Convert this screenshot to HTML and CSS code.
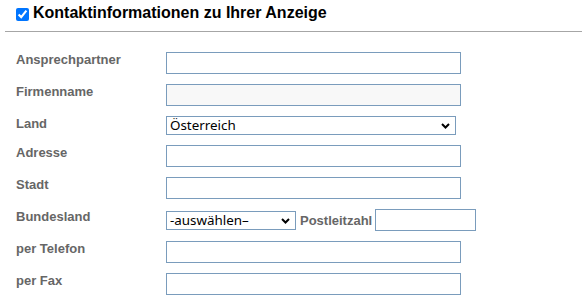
FILE: index.html
```html
<!DOCTYPE html>
<html lang="de">
<head>
    <meta charset="UTF-8">
    <meta name="viewport" content="width=device-width, initial-scale=1.0">
    <title>Kontaktinformationen</title>
    <link rel="stylesheet" href="styles.css">
</head>
<body>
    <div class="kontakt">
        <h2 class="kontakt-titel">
            <input type="checkbox" id="kontaktAktiv" checked>
            <label for="kontaktAktiv">Kontaktinformationen zu Ihrer Anzeige</label>
        </h2>

        <table class="kontakt-tabelle">
            <tr>
                <td class="feld-name">Ansprechpartner</td>
                <td class="feld"><input type="text" class="eingabe"></td>
            </tr>
            <tr>
                <td class="feld-name">Firmenname</td>
                <td class="feld"><input type="text" class="eingabe gesperrt" readonly></td>
            </tr>
            <tr>
                <td class="feld-name">Land</td>
                <td class="feld">
                    <span class="auswahl-box">
                        <select class="auswahl auswahl-land">
                            <option>Österreich</option>
                            <option>Deutschland</option>
                            <option>Schweiz</option>
                        </select>
                        <svg class="pfeil" width="9" height="6" viewBox="0 0 9 6"><path d="M1 1 L4.5 4.5 L8 1" fill="none" stroke="#000" stroke-width="2"/></svg>
                    </span>
                </td>
            </tr>
            <tr>
                <td class="feld-name">Adresse</td>
                <td class="feld"><input type="text" class="eingabe"></td>
            </tr>
            <tr>
                <td class="feld-name">Stadt</td>
                <td class="feld"><input type="text" class="eingabe"></td>
            </tr>
            <tr>
                <td class="feld-name">Bundesland</td>
                <td class="feld feld-zeile">
                    <span class="auswahl-box">
                        <select class="auswahl auswahl-bundesland">
                            <option>-auswählen–</option>
                            <option>Wien</option>
                            <option>Tirol</option>
                        </select>
                        <svg class="pfeil" width="9" height="6" viewBox="0 0 9 6"><path d="M1 1 L4.5 4.5 L8 1" fill="none" stroke="#000" stroke-width="2"/></svg>
                    </span>
                    <span class="feld-name-inline">Postleitzahl</span>
                    <input type="text" class="eingabe eingabe-plz">
                </td>
            </tr>
            <tr>
                <td class="feld-name">per Telefon</td>
                <td class="feld"><input type="text" class="eingabe"></td>
            </tr>
            <tr>
                <td class="feld-name">per Fax</td>
                <td class="feld"><input type="text" class="eingabe"></td>
            </tr>
        </table>
    </div>
</body>
</html>
```

FILE: styles.css
```css
body {
    margin: 0;
    padding: 0;
    background-color: #fff;
    font-family: 'Liberation Sans', Arial, sans-serif;
    color: #000;
}
.kontakt-titel {
    display: flex;
    align-items: flex-start;
    margin: 0 0 0 5px;
    padding: 4px 0 9px 11px;
    font-size: 16px;
    line-height: 18px;
    font-weight: bold;
    border-bottom: 1px solid #a6a6a6;
}
.kontakt-titel input {
    width: 13px;
    height: 13px;
    margin: 4px 4px 0 0;
    accent-color: #0075ff;
}
.kontakt-tabelle {
    margin: 15px 0 0 16px;
    border-collapse: collapse;
}
.kontakt-tabelle td {
    padding: 5px 0;
}
.feld-name, .feld-name-inline {
    font-size: 13px;
    font-weight: bold;
    color: #666;
    line-height: 15px;
}
.feld-name {
    width: 150px;
    vertical-align: top;
}
.feld {
    vertical-align: top;
}
.feld-zeile {
    display: flex;
    align-items: center;
    gap: 4px;
}
.feld-name-inline {
    margin-right: -1px;
}
.eingabe {
    display: block;
    box-sizing: border-box;
    width: 295px;
    height: 22px;
    margin: 0;
    padding: 1px 3px;
    border: 1px solid #7a9cbc;
    background-color: #fff;
    font-family: 'Noto Sans', sans-serif;
    font-size: 13px;
    outline: none;
}
.eingabe.gesperrt {
    background-color: #f8f8f8;
}
.eingabe-plz {
    width: 101px;
}
.auswahl-box {
    position: relative;
    display: block;
    width: fit-content;
}
.auswahl {
    display: block;
    box-sizing: border-box;
    height: 19px;
    margin: 0;
    padding: 0 0 0 3px;
    border: 1px solid #7a9cbc;
    border-radius: 0;
    background-color: #fff;
    color: #000;
    font-family: 'Noto Sans', sans-serif;
    font-size: 13.4px;
    line-height: 17px;
    appearance: none;
    -webkit-appearance: none;
}
.auswahl-land {
    width: 290px;
}
.auswahl-bundesland {
    width: 130px;
}
.pfeil {
    position: absolute;
    right: 6px;
    top: 7px;
    pointer-events: none;
}
```
